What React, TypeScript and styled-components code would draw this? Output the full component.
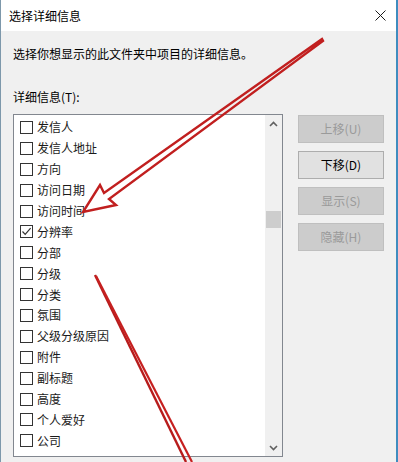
import React from 'react'
import styled, { createGlobalStyle } from 'styled-components'

const GlobalStyle = createGlobalStyle`
  html, body {
    margin: 0;
    padding: 0;
    background: #ffffff;
  }
  body {
    font-family: "Noto Sans CJK SC", "Noto Sans", sans-serif;
    font-size: 12px;
    color: #000000;
  }
`

const Window = styled.div`
  position: relative;
  width: 398px;
  height: 462px;
  box-sizing: border-box;
  border-left: 1px solid #7d98ab;
  border-right: 2px solid #3f8cbf;
  background: #f0f0f0;
  overflow: hidden;
  display: flex;
  flex-direction: column;
`

const TitleBar = styled.div`
  height: 31px;
  flex: 0 0 31px;
  background: #ffffff;
  display: flex;
  align-items: center;
  justify-content: space-between;
  padding: 0 10px 0 8px;
`

const Title = styled.span`
  font-size: 12px;
  line-height: 16px;
  color: #000000;
`

const CloseButton = styled.div`
  width: 12px;
  height: 12px;
  display: flex;
  align-items: center;
  justify-content: center;
`

const Body = styled.div`
  flex: 1;
  padding: 15px 0 0 12px;
  display: flex;
  flex-direction: column;
`

const Text = styled.div<{ $gap?: number }>`
  font-size: 12px;
  line-height: 16px;
  color: #000000;
  margin-bottom: ${({ $gap }) => $gap ?? 0}px;
`

const Content = styled.div`
  display: flex;
  align-items: flex-start;
`

const ListBox = styled.div`
  width: 270px;
  height: 343px;
  box-sizing: border-box;
  border: 1px solid #82878f;
  background: #ffffff;
  display: flex;
`

const Items = styled.div`
  flex: 1;
  padding: 2px 0 0 6px;
  display: flex;
  flex-direction: column;
`

const Row = styled.div`
  height: 20.9px;
  display: flex;
  align-items: center;
  gap: 4px;
`

const Box = styled.div`
  width: 13px;
  height: 13px;
  box-sizing: border-box;
  border: 1px solid #333333;
  background: #ffffff;
  display: flex;
  align-items: center;
  justify-content: center;
`

const Label = styled.span`
  font-size: 12px;
  line-height: 16px;
  color: #1a1a1a;
`

const ScrollBar = styled.div`
  width: 17px;
  background: #f0f0f0;
  display: flex;
  flex-direction: column;
  align-items: center;
`

const Arrow = styled.div`
  height: 17px;
  width: 17px;
  display: flex;
  align-items: center;
  justify-content: center;
`

const Track = styled.div`
  flex: 1;
  width: 100%;
  display: flex;
  flex-direction: column;
  align-items: center;
  padding-top: 79px;
`

const Thumb = styled.div`
  width: 15px;
  height: 17px;
  background: #cdcdcd;
`

const Buttons = styled.div`
  margin-left: 15px;
  margin-top: 1px;
  display: flex;
  flex-direction: column;
  gap: 8px;
`

const Button = styled.div<{ $disabled?: boolean }>`
  width: 86px;
  height: 28px;
  box-sizing: border-box;
  border: 1px solid ${({ $disabled }) => ($disabled ? '#bfbfbf' : '#adadad')};
  background: ${({ $disabled }) => ($disabled ? '#cccccc' : '#e1e1e1')};
  color: ${({ $disabled }) => ($disabled ? '#9a9a9a' : '#000000')};
  font-size: 12px;
  line-height: 16px;
  display: flex;
  align-items: center;
  justify-content: center;
`

const Annotation = styled.svg`
  position: absolute;
  left: -1px;
  top: 0;
  pointer-events: none;
`

const items = [
  '发信人',
  '发信人地址',
  '方向',
  '访问日期',
  '访问时间',
  '分辨率',
  '分部',
  '分级',
  '分类',
  '氛围',
  '父级分级原因',
  '附件',
  '副标题',
  '高度',
  '个人爱好',
  '公司',
]

const checked = '分辨率'

export default function App() {
  return (
    <>
      <GlobalStyle />
      <Window>
        <TitleBar>
          <Title>选择详细信息</Title>
          <CloseButton>
            <svg width="11" height="11" viewBox="0 0 11 11">
              <path d="M0.5 0.5 L10.5 10.5 M10.5 0.5 L0.5 10.5" stroke="#1a1a1a" strokeWidth="1" />
            </svg>
          </CloseButton>
        </TitleBar>
        <Body>
          <Text $gap={27}>选择你想显示的此文件夹中项目的详细信息。</Text>
          <Text $gap={9}>详细信息(T):</Text>
          <Content>
            <ListBox>
              <Items>
                {items.map((name) => (
                  <Row key={name}>
                    <Box>
                      {name === checked && (
                        <svg width="11" height="11" viewBox="0 0 11 11">
                          <path d="M1.5 5.5 L4.2 8.3 L9.6 2.2" fill="none" stroke="#333333" strokeWidth="1.2" />
                        </svg>
                      )}
                    </Box>
                    <Label>{name}</Label>
                  </Row>
                ))}
              </Items>
              <ScrollBar>
                <Arrow>
                  <svg width="9" height="6" viewBox="0 0 9 6">
                    <path d="M1 5 L4.5 1.5 L8 5" fill="none" stroke="#606060" strokeWidth="1.6" />
                  </svg>
                </Arrow>
                <Track>
                  <Thumb />
                </Track>
                <Arrow>
                  <svg width="9" height="6" viewBox="0 0 9 6">
                    <path d="M1 1 L4.5 4.5 L8 1" fill="none" stroke="#606060" strokeWidth="1.6" />
                  </svg>
                </Arrow>
              </ScrollBar>
            </ListBox>
            <Buttons>
              <Button $disabled>上移(U)</Button>
              <Button>下移(D)</Button>
              <Button $disabled>显示(S)</Button>
              <Button $disabled>隐藏(H)</Button>
            </Buttons>
          </Content>
        </Body>
        <Annotation width="398" height="462" viewBox="0 0 398 462">
          <path
            d="M322 39 L104 193 L100 185 L83 212 L116 205 L109 199 L323 41 Z"
            fill="none"
            stroke="#c11f1f"
            strokeWidth="2.4"
            strokeLinejoin="miter"
          />
          <path d="M95 275 L186 462" stroke="#b71c1c" strokeWidth="2.4" fill="none" />
          <path d="M96 276 L192 462" stroke="#c62020" strokeWidth="2.2" fill="none" />
        </Annotation>
      </Window>
    </>
  )
}
